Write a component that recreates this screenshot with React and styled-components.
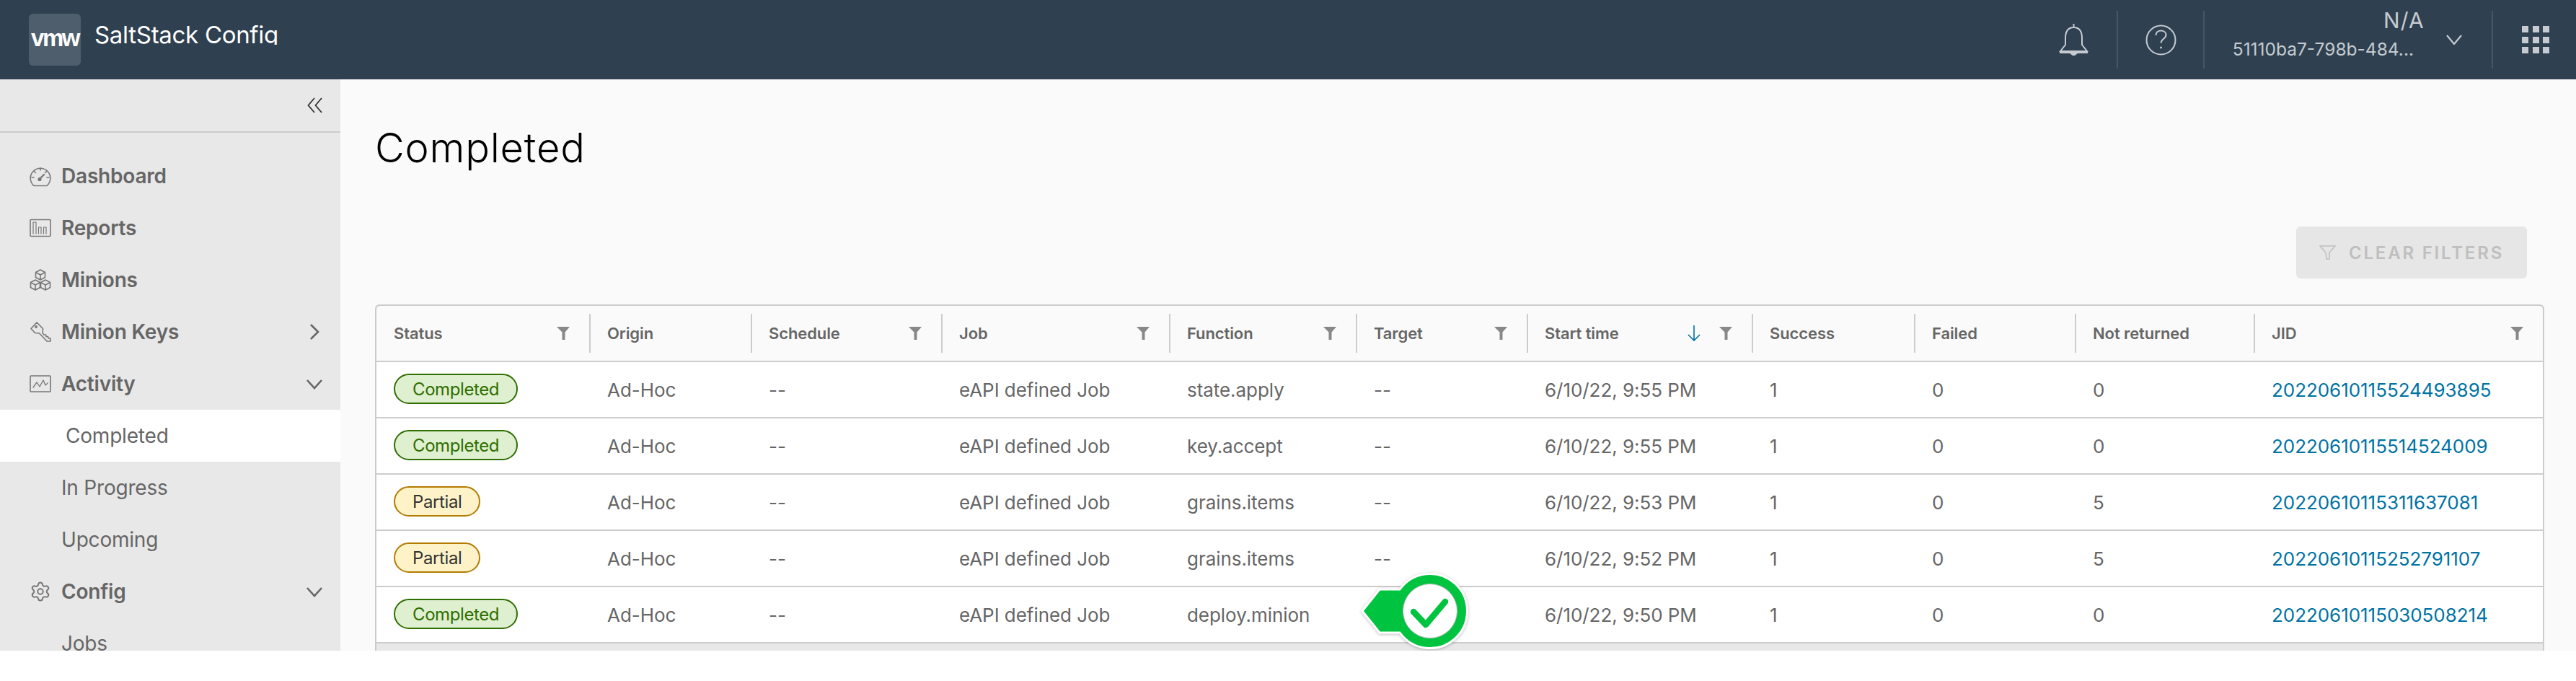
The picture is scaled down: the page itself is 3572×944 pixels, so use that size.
// App.jsx
import React from 'react';
import styled, { createGlobalStyle } from 'styled-components';
import { Settings } from 'lucide-react';

const GlobalStyle = createGlobalStyle`
	html, body {
		margin: 0;
		padding: 0;
		background: #fff;
	}
	* {
		box-sizing: border-box;
	}
`;

const COLUMNS = '295px 224px 264px 316px 259px 237px 312px 225px 223px 248px 401px';

const Page = styled.div`
	width: 3572px;
	height: 902px;
	overflow: hidden;
	display: flex;
	flex-direction: column;
	font-family: Inter, 'Noto Sans', sans-serif;
	color: #666;
`;

const Header = styled.header`
	height: 110px;
	flex: none;
	display: flex;
	align-items: center;
	background: #2f4150;
	padding: 0 37px 0 40px;
	color: #c5cbd1;
`;

const LogoBox = styled.div`
	width: 72px;
	height: 72px;
	border-radius: 6px;
	background: #4e5e6c;
	display: flex;
	align-items: center;
	justify-content: center;
	color: #fff;
	font-family: 'Liberation Sans', sans-serif;
	font-weight: 700;
	font-size: 33px;
	letter-spacing: -2.5px;
	padding-bottom: 4px;
`;

const Brand = styled.div`
	margin-left: 19px;
	height: 32px;
	line-height: 36px;
	overflow: hidden;
	font-size: 33px;
	font-weight: 400;
	letter-spacing: -0.3px;
	color: #fff;
	white-space: nowrap;
	align-self: flex-start;
	margin-top: 30px;
`;

const HeaderRight = styled.div`
	margin-left: auto;
	display: flex;
	align-items: center;
	height: 80px;
`;

const HeaderSlot = styled.div`
	height: 80px;
	display: flex;
	align-items: center;
	justify-content: ${(p) => (p.$end ? 'flex-end' : 'center')};
	width: ${(p) => p.$width}px;
	border-right: ${(p) => (p.$sep ? '2px solid #465663' : 'none')};
`;

const Tenant = styled.div`
	display: flex;
	align-items: center;
	height: 80px;
	padding-left: 34px;
	padding-right: 41px;
	border-right: 2px solid #465663;
`;

const TenantText = styled.div`
	width: 256px;
	text-align: right;
	margin-right: 45px;
	padding-bottom: 15px;
	white-space: nowrap;
	font-size: 24.5px;
	line-height: 36px;
`;

const TenantName = styled.div`
	font-size: 30px;
	letter-spacing: 1.2px;
	margin-right: -15px;
	margin-bottom: 4px;
`;

const Body = styled.div`
	flex: 1;
	min-height: 0;
	display: flex;
`;

const Sidebar = styled.nav`
	width: 472px;
	flex: none;
	background: #e8e8e8;
`;

const CollapseRow = styled.div`
	height: 74px;
	border-bottom: 2px solid #ccc;
	margin-bottom: 24px;
	display: flex;
	align-items: center;
	justify-content: flex-end;
	padding-right: 25px;
`;

const NavItem = styled.div`
	height: 72px;
	display: flex;
	align-items: center;
	gap: 14px;
	padding-left: ${(p) => (p.$active ? 91 : p.$sub ? 85 : 41)}px;
	padding-right: 25px;
	font-size: 28px;
	font-weight: ${(p) => (p.$sub ? 400 : 600)};
	letter-spacing: ${(p) => (p.$sub ? '-0.2px' : '-0.2px')};
	background: ${(p) => (p.$active ? '#fff' : 'transparent')};
	color: #666;
	flex: none;
`;

const NavIcon = styled.svg`
	width: 30px;
	height: 30px;
	flex: none;
	fill: none;
	stroke: #777;
	stroke-width: 1.6;
	stroke-linejoin: round;
	stroke-linecap: round;
`;

const NavChevron = styled.svg`
	margin-left: auto;
	width: 22px;
	height: 22px;
	flex: none;
	fill: none;
	stroke: #666;
	stroke-width: 2.6;
`;

const Main = styled.main`
	flex: 1;
	min-width: 0;
	background: #fafafa;
	padding: 63px 44px 0 48px;
	display: flex;
	flex-direction: column;
`;

const Title = styled.h1`
	margin: 0;
	font-size: 56px;
	line-height: 64px;
	font-weight: 300;
	color: #000;
	letter-spacing: 0.8px;
`;

const Toolbar = styled.div`
	margin-top: 77px;
	padding-right: 24px;
	display: flex;
	justify-content: flex-end;
`;

const ClearButton = styled.button`
	width: 320px;
	height: 72px;
	border: none;
	border-radius: 6px;
	background: #e6e6e6;
	color: #bfbfbf;
	display: flex;
	align-items: center;
	justify-content: center;
	gap: 18px;
	font-family: inherit;
	font-size: 24px;
	font-weight: 600;
	letter-spacing: 2.8px;
	white-space: nowrap;
	padding: 0;
`;

const Table = styled.div`
	margin-top: 36px;
	flex: 1;
	position: relative;
	border: 2px solid #ccc;
	border-bottom: none;
	border-radius: 6px 6px 0 0;
	background: #e8e8e8;
	display: flex;
	flex-direction: column;
`;

const HeadRow = styled.div`
	display: grid;
	grid-template-columns: ${COLUMNS};
	align-items: center;
	height: 78px;
	background: #fafafa;
	border-bottom: 2px solid #ccc;
	border-radius: 6px 6px 0 0;
`;

const HeadCell = styled.div`
	height: 54px;
	display: flex;
	align-items: center;
	padding: 0 27px 0 23px;
	border-left: 2px solid #ccc;
	font-size: 22px;
	font-weight: 600;
	letter-spacing: -0.1px;
	white-space: nowrap;
	color: #666;

	&:first-child {
		border-left: none;
		padding-left: 24px;
	}
`;

const FilterIcon = styled.svg`
	width: 18px;
	height: 18px;
	flex: none;
	fill: #888;
	margin-left: ${(p) => (p.$afterSort ? '25px' : 'auto')};
`;

const SortIcon = styled.svg`
	width: 20px;
	height: 22px;
	flex: none;
	fill: none;
	stroke: #0072a3;
	stroke-width: 1.6;
	margin-left: auto;
`;

const Row = styled.div`
	display: grid;
	grid-template-columns: ${COLUMNS};
	align-items: center;
	height: 78px;
	background: #fff;
	border-bottom: 2px solid #ccc;
`;

const Cell = styled.div`
	padding-left: 25px;
	font-size: 26px;
	letter-spacing: -0.05px;
	white-space: nowrap;
	color: #666;

	&:first-child {
		padding-left: 24px;
	}
`;

const Badge = styled.span`
	display: inline-flex;
	align-items: center;
	height: 42px;
	padding: 0 24px;
	border-radius: 21px;
	border: 2px solid ${(p) => (p.$kind === 'Partial' ? '#b27b00' : '#2f6e00')};
	background: ${(p) => (p.$kind === 'Partial' ? '#fef3c8' : '#dff0d0')};
	color: ${(p) => (p.$kind === 'Partial' ? '#333' : '#2f6e00')};
	font-size: 24px;
	letter-spacing: -0.4px;
	margin-bottom: 2px;
	vertical-align: middle;
`;

const JobLink = styled.a`
	color: #0072a3;
	text-decoration: none;
`;

const SuccessMark = styled.svg`
	position: absolute;
	left: 1364px;
	top: 368px;
	width: 150px;
	height: 114px;
	filter: drop-shadow(0 1px 2px rgba(0, 0, 0, 0.25));
`;

const DashIcon = () => (
	<NavIcon viewBox="0 0 30 30">
		<path d="M6 28.5h18M6 28.5A13.8 13.8 0 1 1 24 28.5" />
		<path d="M15 4v3M3 17h3M24 17h3M6.5 8.5l2 2M23.5 8.5l-2 2" />
		<path d="M14 19l6-6" strokeWidth="2.4" />
		<circle cx="14" cy="19.5" r="1.8" fill="#777" />
	</NavIcon>
);

const ReportsIcon = () => (
	<NavIcon viewBox="0 0 30 30">
		<rect x="1" y="3.5" width="28" height="23" rx="1" />
		<path d="M5 23V7h4v16M12.5 23v-9h3.5v9M19.5 23v-9h3.5v9" strokeWidth="1.2" />
	</NavIcon>
);

const CubesIcon = () => (
	<NavIcon viewBox="0 0 30 30">
		<path d="M15 1l6.5 3.5v7L15 15l-6.5-3.5v-7zM8.5 4.5L15 8l6.5-3.5M15 8v7" />
		<path d="M8 15l6.5 3.5v7L8 29l-6.5-3.5v-7zM1.5 18.5L8 22l6.5-3.5M8 22v7" />
		<path d="M22 15l6.5 3.5v7L22 29l-6.5-3.500v-7zM15.500 18.500L22 22l6.500-3.500M22 22v7" />
	</NavIcon>
);

const KeyIcon = () => (
	<NavIcon viewBox="0 0 30 30">
		<path d="M10 2L2 10.500l5.500 6 6 .5L24 28h5v-4h-3l-.5-2.500H23l-.5-2.500h-2.500L18 16.500l.5-6z" />
		<circle cx="9" cy="8" r="1.200" />
	</NavIcon>
);

const ActivityIcon = () => (
	<NavIcon viewBox="0 0 30 30">
		<rect x="1" y="4" width="28" height="22" rx="1" />
		<path d="M5 20l5-7 4 6 5-9 3 7 3-3" strokeWidth="1.300" />
	</NavIcon>
);

const NAV = [
	{ label: 'Dashboard', icon: <DashIcon /> },
	{ label: 'Reports', icon: <ReportsIcon /> },
	{ label: 'Minions', icon: <CubesIcon /> },
	{ label: 'Minion Keys', icon: <KeyIcon />, chevron: 'M6 1l10 10L6 21' },
	{ label: 'Activity', icon: <ActivityIcon />, chevron: 'M1 6l10 11L21 6' },
	{ label: 'Completed', sub: true, active: true },
	{ label: 'In Progress', sub: true },
	{ label: 'Upcoming', sub: true },
	{
		label: 'Config',
		icon: <NavIcon as={Settings} strokeWidth={1.3} />,
		chevron: 'M1 6l10 11L21 6',
	},
	{ label: 'Jobs', sub: true },
];

const HEADS = [
	{ label: 'Status', filter: true },
	{ label: 'Origin' },
	{ label: 'Schedule', filter: true },
	{ label: 'Job', filter: true },
	{ label: 'Function', filter: true },
	{ label: 'Target', filter: true },
	{ label: 'Start time', filter: true, sort: true },
	{ label: 'Success' },
	{ label: 'Failed' },
	{ label: 'Not returned' },
	{ label: 'JID', filter: true },
];

const JOBS = [
	['Completed', 'state.apply', '9:55', 0, '20220610115524493895'],
	['Completed', 'key.accept', '9:55', 0, '20220610115514524009'],
	['Partial', 'grains.items', '9:53', 5, '20220610115311637081'],
	['Partial', 'grains.items', '9:52', 5, '20220610115252791107'],
	['Completed', 'deploy.minion', '9:50', 0, '20220610115030508214'],
];

const Funnel = (props) => (
	<FilterIcon viewBox="0 0 18 18" {...props}>
		<path d="M0 0h18l-6.500 7.500V18h-4V7.500z" />
	</FilterIcon>
);

export default function App() {
	return (
		<Page>
			<GlobalStyle />
			<Header>
				<LogoBox>vmw</LogoBox>
				<Brand>SaltStack Config</Brand>
				<HeaderRight>
					<HeaderSlot $width={122} $sep>
						<svg width="41" height="44" viewBox="0 0 41 44" fill="none" stroke="#c5cbd1" strokeWidth="2">
							<path d="M20.500 0v5M20.500 5C12 5 9 12 9 20v9L2 38h37l-7-9v-9c0-8-3-15-11.500-15z" />
							<path d="M1 39.500h39" strokeWidth="3" />
							<path d="M18 42h5l-2.500 2z" fill="#c5cbd1" />
						</svg>
					</HeaderSlot>
					<HeaderSlot $width={120} $sep>
						<svg width="43" height="43" viewBox="0 0 43 43" fill="none" stroke="#c5cbd1" strokeWidth="2">
							<circle cx="21.500" cy="21.500" r="20" />
							<path d="M14.500 15c0-4 3-6.500 7-6.500s7 2.500 7 6c0 5-7 5.500-7 11" />
							<circle cx="21.500" cy="32" r="1.400" fill="#c5cbd1" stroke="none" />
						</svg>
					</HeaderSlot>
					<Tenant>
						<TenantText>
							<TenantName>N/A</TenantName>
							51110ba7-798b-484...
						</TenantText>
						<svg width="22" height="14" viewBox="0 0 22 14" fill="none" stroke="#c5cbd1" strokeWidth="2.200">
							<path d="M1 1l10 12L21 1" />
						</svg>
					</Tenant>
					<HeaderSlot $width={78} $end>
						<svg width="38" height="38" viewBox="0 0 38 38" fill="#c5cbd1">
							{[0, 15, 29].map((y) =>
								[0, 15, 29].map((x) => <rect key={`${x}-${y}`} x={x} y={y} width="9" height="9" />)
							)}
						</svg>
					</HeaderSlot>
				</HeaderRight>
			</Header>
			<Body>
				<Sidebar>
					<CollapseRow>
						<svg width="21" height="22" viewBox="0 0 21 22" fill="none" stroke="#333" strokeWidth="1.800">
							<path d="M10 1L1.500 11l8.500 10M20 1l-8.500 10 8.500 10" />
						</svg>
					</CollapseRow>
					{NAV.map((item) => (
						<NavItem key={item.label} $sub={item.sub} $active={item.active}>
							{item.icon}
							{item.label}
							{item.chevron && (
								<NavChevron viewBox="0 0 22 22">
									<path d={item.chevron} />
								</NavChevron>
							)}
						</NavItem>
					))}
				</Sidebar>
				<Main>
					<Title>Completed</Title>
					<Toolbar>
						<ClearButton>
							<svg width="23" height="20" viewBox="0 0 23 20" fill="none" stroke="#bfbfbf" strokeWidth="1.500">
								<path d="M1 1h21l-8 9v9h-4l-1-9z" />
							</svg>
							CLEAR FILTERS
						</ClearButton>
					</Toolbar>
					<Table>
						<HeadRow>
							{HEADS.map((head) => (
								<HeadCell key={head.label}>
									{head.label}
									{head.sort && (
										<SortIcon viewBox="0 0 20 22">
											<path d="M10 0v21M2 13l8 8 8-8" />
										</SortIcon>
									)}
									{head.filter && <Funnel $afterSort={head.sort} />}
								</HeadCell>
							))}
						</HeadRow>
						{JOBS.map(([status, fn, time, missing, jid]) => (
							<Row key={jid}>
								<Cell>
									<Badge $kind={status}>{status}</Badge>
								</Cell>
								<Cell>Ad-Hoc</Cell>
								<Cell>--</Cell>
								<Cell>eAPI defined Job</Cell>
								<Cell>{fn}</Cell>
								<Cell>--</Cell>
								<Cell>6/10/22, {time} PM</Cell>
								<Cell>1</Cell>
								<Cell>0</Cell>
								<Cell>{missing}</Cell>
								<Cell>
									<JobLink href="#">{jid}</JobLink>
								</Cell>
							</Row>
						))}
						<SuccessMark viewBox="0 0 150 114">
							<path
								d="M3 55L27 25H55.100A51.500 51.500 0 1 1 55.100 85H27z"
								fill="#00c43f"
								stroke="#fff"
								strokeWidth="3"
							/>
							<circle cx="97" cy="55" r="37.500" fill="#fff" stroke="#bbb" strokeWidth="1" />
							<path
								d="M74 56l17 18 27-32"
								fill="none"
								stroke="#00c43f"
								strokeWidth="8.500"
								strokeLinecap="round"
								strokeLinejoin="round"
							/>
						</SuccessMark>
					</Table>
				</Main>
			</Body>
		</Page>
	);
}
